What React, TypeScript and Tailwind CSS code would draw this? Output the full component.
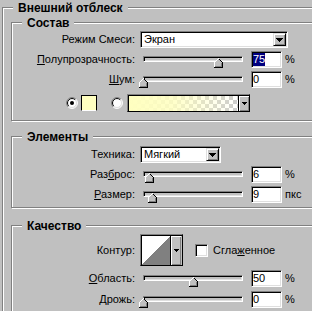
import React from "react";

const sunken =
  "border border-t-[#808080] border-l-[#808080] border-r-white border-b-white shadow-[inset_1px_1px_0_#000,inset_-1px_-1px_0_#dfdfdf]";
const raised =
  "border border-t-[#dfdfdf] border-l-[#dfdfdf] border-r-black border-b-black shadow-[inset_1px_1px_0_#fff,inset_-1px_-1px_0_#808080] bg-[#c0c0c0]";

function Group({ title, className, children }: { title: string; className: string; children?: React.ReactNode }) {
  return (
    <div className={"relative border border-[#808080] shadow-[inset_1px_1px_0_#fff,1px_1px_0_#fff] " + className}>
      <span className="absolute -top-[7px] left-[10px] bg-[#c0c0c0] px-[5px] text-[12px] font-bold leading-[14px] whitespace-nowrap">
        {title}
      </span>
      {children}
    </div>
  );
}

function Arrow({ big }: { big?: boolean }) {
  if (big) {
    return (
      <svg width="7" height="4" viewBox="0 0 7 4" shapeRendering="crispEdges">
        <rect x="0" y="0" width="7" height="1" fill="#000" />
        <rect x="1" y="1" width="5" height="1" fill="#000" />
        <rect x="2" y="2" width="3" height="1" fill="#000" />
        <rect x="3" y="3" width="1" height="1" fill="#000" />
      </svg>
    );
  }
  return (
    <svg width="5" height="3" viewBox="0 0 5 3" shapeRendering="crispEdges">
      <rect x="0" y="0" width="5" height="1" fill="#000" />
      <rect x="1" y="1" width="3" height="1" fill="#000" />
      <rect x="2" y="2" width="1" height="1" fill="#000" />
    </svg>
  );
}

function Thumb({ left }: { left: number }) {
  const px: { x: number; y: number; c: string }[] = [];
  for (let r = 0; r <= 4; r++) {
    for (let x = 4 - r; x <= 4 + r; x++) {
      let c = "#c0c0c0";
      if (x === 4 - r) c = "#fff";
      else if (x === 4 + r) c = "#000";
      px.push({ x, y: r, c });
    }
  }
  for (let r = 5; r <= 9; r++) {
    for (let x = 0; x <= 8; x++) {
      let c = "#c0c0c0";
      if (r === 9) c = "#000";
      else if (x === 0) c = "#fff";
      else if (x === 8) c = "#000";
      else if (x === 7 || r === 8) c = "#808080";
      px.push({ x, y: r, c });
    }
  }
  return (
    <svg
      width="9"
      height="10"
      viewBox="0 0 9 10"
      shapeRendering="crispEdges"
      className="absolute top-[1px]"
      style={{ left }}
    >
      {px.map((p, i) => (
        <rect key={i} x={p.x} y={p.y} width="1" height="1" fill={p.c} />
      ))}
    </svg>
  );
}

function Radio({ checked, className }: { checked?: boolean; className: string }) {
  const a = (r: number) => {
    const d = r * 0.7071;
    return { x1: 6 - d, y1: 6 + d, x2: 6 + d, y2: 6 - d };
  };
  const o = a(5.5);
  const i = a(4.5);
  return (
    <svg width="12" height="12" viewBox="0 0 12 12" className={className}>
      <circle cx="6" cy="6" r="5" fill="#fff" />
      <path d={`M${o.x1} ${o.y1} A5.5 5.5 0 0 1 ${o.x2} ${o.y2}`} stroke="#808080" fill="none" />
      <path d={`M${o.x2} ${o.y2} A5.5 5.5 0 0 1 ${o.x1} ${o.y1}`} stroke="#fff" fill="none" />
      <path d={`M${i.x1} ${i.y1} A4.5 4.5 0 0 1 ${i.x2} ${i.y2}`} stroke="#000" fill="none" />
      <path d={`M${i.x2} ${i.y2} A4.5 4.5 0 0 1 ${i.x1} ${i.y1}`} stroke="#dfdfdf" fill="none" />
      {checked && <circle cx="6" cy="6" r="2" fill="#000" />}
    </svg>
  );
}

function Select({ text, className }: { text: string; className: string }) {
  return (
    <div className={"flex h-[17px] bg-white p-px " + sunken + " " + className}>
      <span className="flex-1 pl-[2px] leading-[13px]">{text}</span>
      <div className={"flex h-[13px] w-[13px] items-center justify-center " + raised}>
        <Arrow big />
      </div>
    </div>
  );
}

function Input({ children }: { children: React.ReactNode }) {
  return (
    <div className={"ml-[8px] flex h-[17px] w-[31px] items-center bg-white pl-px leading-[13px] " + sunken}>
      {children}
    </div>
  );
}

function SliderRow({ label, value, unit }: { label: React.ReactNode; value: number; unit: string; selected?: boolean }) {
  return (
    <div className="flex h-[17px] items-start">
      <div className="w-[123px] text-right leading-[17px]">{label}</div>
      <div className={"relative ml-[8px] mt-[5px] h-[6px] w-[100px] bg-[#c0c0c0] " + sunken}>
        <Thumb left={value - 5} />
      </div>
      <Input>
        {value === 75 ? <span className="bg-[#000080] text-white">75</span> : <span>{value}</span>}
      </Input>
      <span className="ml-[3px] leading-[17px]">{unit}</span>
    </div>
  );
}

export default function App() {
  return (
    <div className="h-[311px] w-[312px] overflow-hidden bg-[#c0c0c0] pl-[2px] pt-[7px] font-['Liberation_Sans',Arial,sans-serif] text-[11px] text-black">
      <Group title="Внешний отблеск" className="h-[330px] w-[340px]">
        <Group title="Состав" className="ml-[8px] mt-[14px] pb-[8px] pt-[8px]">
          <div className="flex flex-col gap-[3px]">
            <div className="flex h-[17px] items-center">
              <div className="w-[123px] text-right">Режим Смеси:</div>
              <Select text="Экран" className="ml-[5px] w-[148px]" />
            </div>
            <SliderRow
              label={
                <>
                  <span className="underline">П</span>олупрозрачность:
                </>
              }
              value={75}
              unit="%"
            />
            <SliderRow
              label={
                <>
                  <span className="underline">Ш</span>ум:
                </>
              }
              value={0}
              unit="%"
            />
            <div className="mt-[3px] flex h-[18px] items-center">
              <Radio checked className="ml-[54px]" />
              <div className="ml-[3px] h-[16px] w-[16px] border border-black border-b-white bg-[#ffffc0]" />
              <Radio className="ml-[14px]" />
              <div className="ml-[4px] flex h-[18px] w-[123px] border border-t-[#808080] border-l-[#808080] border-r-black border-b-black pl-px pt-px shadow-[inset_1px_1px_0_#000]">
                <div className="flex-1 bg-[conic-gradient(#cccccc_25%,#ffffff_0_50%,#cccccc_0_75%,#ffffff_0)] bg-[length:8px_8px]">
                  <div className="h-full w-full bg-[linear-gradient(to_right,#ffffc0_0%,rgba(255,255,192,0.85)_40%,rgba(255,255,192,0)_100%)]" />
                </div>
                <div className="flex w-[11px] items-center justify-center border-l border-l-black bg-[#c0c0c0] shadow-[inset_1px_1px_0_#fff,inset_-1px_-1px_0_#808080]">
                  <Arrow />
                </div>
              </div>
            </div>
          </div>
        </Group>

        <Group title="Элементы" className="ml-[8px] mt-[15px] pb-[4px] pt-[9px]">
          <div className="flex flex-col gap-[3px]">
            <div className="flex h-[17px] items-center">
              <div className="w-[123px] text-right">Техника:</div>
              <Select text="Мягкий" className="ml-[5px] w-[81px]" />
            </div>
            <SliderRow
              label={
                <>
                  Раз<span className="underline">б</span>рос:
                </>
              }
              value={6}
              unit="%"
            />
            <SliderRow
              label={
                <>
                  <span className="underline">Р</span>азмер:
                </>
              }
              value={9}
              unit="пкс"
            />
          </div>
        </Group>

        <Group title="Качество" className="ml-[8px] mt-[17px] h-[120px] pt-[8px]">
          <div className="flex flex-col gap-[4px]">
            <div className="flex h-[32px] items-center">
              <div className="w-[123px] text-right">Контур:</div>
              <div className="ml-[5px] flex h-[32px] w-[43px] border border-t-[#808080] border-l-[#808080] border-r-black border-b-black pl-px pt-px shadow-[inset_1px_1px_0_#000]">
                <svg width="28" height="29" viewBox="0 0 28 29" shapeRendering="crispEdges">
                  <rect x="0" y="0" width="28" height="29" fill="#fff" />
                  <polygon points="0,29 28,0 28,29" fill="#808080" />
                </svg>
                <div className="flex w-[11px] items-center justify-center border-l border-l-black bg-[#c0c0c0] shadow-[inset_1px_1px_0_#fff,inset_-1px_-1px_0_#808080]">
                  <Arrow />
                </div>
              </div>
              <div className={"ml-[12px] h-[13px] w-[13px] bg-white " + sunken} />
              <span className="ml-[5px]">
                Сгла<span className="underline">ж</span>енное
              </span>
            </div>
            <SliderRow
              label={
                <>
                  <span className="underline">О</span>бласть:
                </>
              }
              value={50}
              unit="%"
            />
            <SliderRow
              label={
                <>
                  <span className="underline">Д</span>рожь:
                </>
              }
              value={0}
              unit="%"
            />
          </div>
        </Group>
      </Group>
    </div>
  );
}
